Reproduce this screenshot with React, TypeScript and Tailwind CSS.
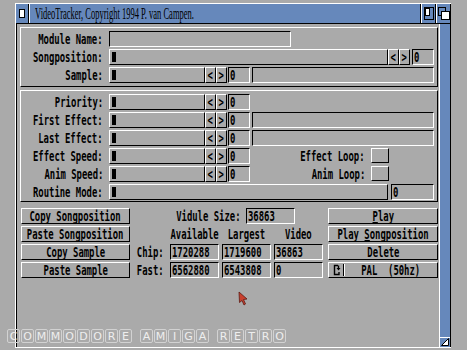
import React from 'react';

const raised = 'border border-t-white border-l-white border-r-black border-b-black';
const sunken = 'border border-t-black border-l-black border-r-white border-b-white';

// topaz-ish narrow bitmap look: mono bold squeezed horizontally
function T({ children, className = '' }: { children: React.ReactNode; className?: string }) {
  return (
    <span
      className={`inline-block shrink-0 whitespace-pre text-[13.5px] leading-[14px] font-bold text-black scale-x-[0.66] ${className}`}
    >
      {children}
    </span>
  );
}

function Label({ text, w = 'w-[82px]' }: { text: string; w?: string }) {
  return (
    <div className={`flex h-full items-center justify-end shrink-0 ${w}`}>
      <T className="origin-right">{text}</T>
    </div>
  );
}

function Slider({ w }: { w: string }) {
  return (
    <div className={`flex h-full items-center pl-[2px] shrink-0 ${w} ${raised}`}>
      <div className="h-[10px] w-[4px] bg-black" />
    </div>
  );
}

function Arrows() {
  return (
    <>
      <div className={`flex h-full w-[11px] items-center justify-center overflow-hidden shrink-0 ${raised}`}>
        <T>{'<'}</T>
      </div>
      <div className={`flex h-full w-[11px] items-center justify-center overflow-hidden shrink-0 ${raised}`}>
        <T>{'>'}</T>
      </div>
    </>
  );
}

function Num({ v, w = 'w-[22px]', className = '' }: { v: string; w?: string; className?: string }) {
  return (
    <div className={`flex h-full items-center overflow-hidden pl-[1px] shrink-0 ${w} ${sunken} ${className}`}>
      <T className="origin-left">{v}</T>
    </div>
  );
}

function Button({ children }: { children: React.ReactNode }) {
  return (
    <div className={`flex h-[16px] items-center justify-center ${raised}`}>
      <T>{children}</T>
    </div>
  );
}

// keyboard shortcut letter
function U({ children }: { children: React.ReactNode }) {
  return <span className="inline-block border-b border-black pb-[1px] leading-[10px]">{children}</span>;
}

function SliderRow({ label, text }: { label: string; text?: boolean }) {
  return (
    <div className="flex h-[16px]">
      <Label text={label} />
      <div className="ml-[6px] flex h-full">
        <Slider w="w-[96px]" />
        <Arrows />
        <Num v="0" className="ml-[1px]" />
        {text && <div className={`ml-[2px] h-full w-[182px] ${sunken}`} />}
      </div>
    </div>
  );
}

function SpeedRow({ label, loop }: { label: string; loop: string }) {
  return (
    <div className="flex h-[16px]">
      <Label text={label} />
      <div className="ml-[6px] flex h-full">
        <Slider w="w-[96px]" />
        <Arrows />
        <Num v="0" className="ml-[1px]" />
        <Label text={loop} w="w-[115px]" />
        <div className={`ml-[6px] h-[15px] w-[18px] ${raised}`} />
      </div>
    </div>
  );
}

function Letters({ word }: { word: string }) {
  return (
    <div className="flex gap-[1px]">
      {word.split('').map((c, i) => (
        <div
          key={i}
          className="flex h-[14px] w-[13px] items-center justify-center rounded-[2px] border border-[#d2d2d2] text-[11px] leading-none text-[#eeeeee] font-['DejaVu_Sans',sans-serif]"
        >
          {c}
        </div>
      ))}
    </div>
  );
}

export default function App() {
  return (
    <div className="relative h-[350px] w-[467px] overflow-hidden bg-[#aaaaaa] font-['DejaVu_Sans_Mono',monospace]">
      <div className="ml-[15px] mt-[3px] flex h-[345px] w-[436px] flex-col border-l border-t border-white">
        {/* title bar */}
        <div className="flex h-[20px] shrink-0 border-b border-black bg-[#6688bb]">
          <div className="flex w-[12px] items-center justify-center">
            <div className="h-[9px] w-[6px] border border-black bg-white" />
          </div>
          <div className="w-[1px] bg-black" />
          <div className="w-[1px] bg-white" />
          <div className="flex flex-1 items-center pl-[5px]">
            <span className="inline-block origin-left scale-x-[0.5] whitespace-pre text-[17px] leading-[18px] text-black font-['Liberation_Serif',serif]">
              VideoTracker, Copyright 1994 P. van Campen.
            </span>
          </div>
          <div className="w-[1px] bg-black" />
          <div className="w-[1px] bg-white" />
          <div className="flex w-[13px] items-center justify-center">
            <svg width="10" height="13" viewBox="0 0 10 13">
              <rect x="0.5" y="0.5" width="9" height="12" fill="none" stroke="#000" />
              <rect x="1.5" y="1.5" width="4" height="7" fill="#fff" stroke="#000" />
            </svg>
          </div>
          <div className="w-[1px] bg-black" />
          <div className="w-[1px] bg-white" />
          <div className="flex w-[13px] items-center justify-center">
            <svg width="12" height="13" viewBox="0 0 12 13">
              <rect x="0.5" y="0.5" width="7" height="8" fill="none" stroke="#000" />
              <rect x="3.5" y="4.5" width="8" height="8" fill="#fff" stroke="#000" />
            </svg>
          </div>
          <div className="w-[1px] bg-black" />
        </div>

        <div className="flex flex-1">
          <div className="w-[1px] bg-black" />
          {/* window contents */}
          <div className="w-[422px] pt-[3px]">
            <div className={`ml-[3px] flex h-[60px] w-[418px] flex-col gap-[2px] pt-[3px] ${raised}`}>
              <div className="flex h-[16px]">
                <Label text="Module Name:" />
                <div className={`ml-[6px] h-full w-[182px] ${sunken}`} />
              </div>
              <div className="flex h-[16px]">
                <Label text="Songposition:" />
                <div className="ml-[6px] flex h-full">
                  <Slider w="w-[279px]" />
                  <Arrows />
                  <Num v="0" className="ml-[2px]" />
                </div>
              </div>
              <SliderRow label="Sample:" text />
            </div>

            <div className={`ml-[3px] mt-[3px] flex h-[112px] w-[418px] flex-col gap-[2px] pt-[3px] ${raised}`}>
              <SliderRow label="Priority:" />
              <SliderRow label="First Effect:" text />
              <SliderRow label="Last Effect:" text />
              <SpeedRow label="Effect Speed:" loop="Effect Loop:" />
              <SpeedRow label="Anim Speed:" loop="Anim Loop:" />
              <div className="flex h-[16px]">
                <Label text="Routine Mode:" />
                <div className="ml-[6px] flex h-full">
                  <Slider w="w-[279px]" />
                  <Num v="0" w="w-[43px]" className="ml-[3px]" />
                </div>
              </div>
            </div>

            <div className="ml-[4px] mt-[6px] flex">
              <div className="flex w-[109px] flex-col gap-[2px]">
                <Button>Copy Songposition</Button>
                <Button>Paste Songposition</Button>
                <Button>Copy Sample</Button>
                <Button>Paste Sample</Button>
              </div>

              <div className="ml-[1px] flex w-[197px] flex-col gap-[2px]">
                <div className="flex h-[16px]">
                  <Label text="Vidule Size:" w="w-[110px]" />
                  <Num v="36863" w="w-[49px]" className="ml-[5px]" />
                </div>
                <div className="flex h-[16px] gap-[3px] pl-[39px]">
                  <div className="flex w-[49px] items-center justify-center"><T>Available</T></div>
                  <div className="flex w-[49px] items-center justify-center"><T>Largest</T></div>
                  <div className="flex w-[49px] items-center justify-center"><T>Video</T></div>
                </div>
                <div className="flex h-[16px]">
                  <Label text="Chip:" w="w-[33px]" />
                  <div className="ml-[6px] flex h-full gap-[3px]">
                    <Num v="1720288" w="w-[49px]" />
                    <Num v="1719600" w="w-[49px]" />
                    <Num v="36863" w="w-[49px]" />
                  </div>
                </div>
                <div className="flex h-[16px]">
                  <Label text="Fast:" w="w-[33px]" />
                  <div className="ml-[6px] flex h-full gap-[3px]">
                    <Num v="6562880" w="w-[49px]" />
                    <Num v="6543808" w="w-[49px]" />
                    <Num v="0" w="w-[49px]" />
                  </div>
                </div>
              </div>

              <div className="flex w-[110px] flex-col gap-[2px]">
                <Button>
                  <U>P</U>lay
                </Button>
                <Button>
                  Play <U>S</U>ongposition
                </Button>
                <Button>Delete</Button>
                <div className={`flex h-[16px] items-center ${raised}`}>
                  <div className="flex w-[14px] items-center justify-center">
                    <svg width="9" height="12" viewBox="0 0 9 12">
                      <path d="M6 1.5H2.5V10.5H7V8" fill="none" stroke="#000" strokeWidth="1.4" />
                      <path d="M4.5 4L6.5 6.5L8.5 4Z" fill="#000" />
                      <path d="M6.5 1.5V5" stroke="#000" strokeWidth="1.4" />
                    </svg>
                  </div>
                  <div className="h-[12px] w-[1px] bg-black" />
                  <div className="h-[12px] w-[1px] bg-white" />
                  <div className="flex flex-1 justify-center overflow-hidden">
                    <T>PAL  (50hz)</T>
                  </div>
                </div>
              </div>
            </div>
          </div>

          {/* right border with size gadget */}
          <div className="flex w-[12px] flex-col border-l border-r border-l-white border-r-black bg-[#6688bb]">
            <div className="flex-1" />
            <div className="flex h-[10px] items-end justify-end border-t border-white pb-[1px] pr-[1px]">
              <svg width="8" height="8" viewBox="0 0 8 8">
                <path d="M7.5 0.5V7.5H0.5Z" fill="#fff" stroke="#000" />
              </svg>
            </div>
          </div>
        </div>
        <div className="h-[1px] bg-white" />
      </div>

      {/* mouse pointer */}
      <svg className="absolute left-[238px] top-[291px]" width="10" height="15" viewBox="0 0 10 15">
        <path d="M1 1L9 8L5.5 8.5L7.5 13L6 14L4 9.5L1.5 11.5Z" fill="#c8402e" stroke="#5a1a14" strokeWidth="0.8" />
      </svg>

      {/* watermark */}
      <div className="absolute left-[7px] top-[329px] flex gap-[8px]">
        <Letters word="COMMODORE" />
        <Letters word="AMIGA" />
        <Letters word="RETRO" />
      </div>
    </div>
  );
}
